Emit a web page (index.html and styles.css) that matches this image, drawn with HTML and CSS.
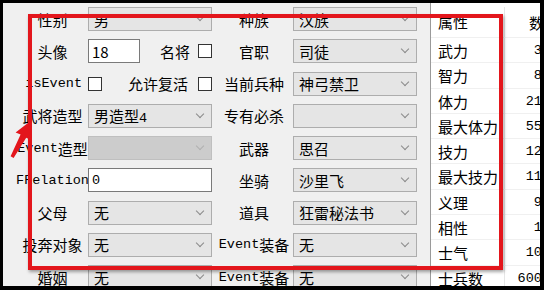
FILE: index.html
```html
<!DOCTYPE html>
<html lang="zh-CN">
<head>
    <meta charset="UTF-8">
    <title>武将属性</title>
    <link rel="stylesheet" href="styles.css">
</head>
<body>
    <div class="window">
        <div class="form">
            <span class="lbl">性别</span>
            <div class="combo"><span>男</span><i class="chev"></i></div>
            <span class="lbl">种族</span>
            <div class="combo"><span>汉族</span><i class="chev"></i></div>

            <span class="lbl">头像</span>
            <div class="field">
                <div class="text short">18</div>
                <span class="side">名将</span>
                <i class="check"></i>
            </div>
            <span class="lbl">官职</span>
            <div class="combo"><span>司徒</span><i class="chev"></i></div>

            <span class="lbl right"><span class="en">isEvent</span></span>
            <div class="field">
                <i class="check"></i>
                <span class="side wide">允许复活</span>
                <i class="check"></i>
            </div>
            <span class="lbl">当前兵种</span>
            <div class="combo"><span>神弓禁卫</span><i class="chev"></i></div>

            <span class="lbl">武将造型</span>
            <div class="combo"><span>男造型<span class="en">4</span></span><i class="chev"></i></div>
            <span class="lbl">专有必杀</span>
            <div class="combo"><span></span><i class="chev"></i></div>

            <span class="lbl"><span class="en">Event</span>造型</span>
            <div class="combo off"><span></span><i class="chev"></i></div>
            <span class="lbl">武器</span>
            <div class="combo"><span>思召</span><i class="chev"></i></div>

            <span class="lbl"><span class="en">FRelation</span></span>
            <div class="text"><span class="en">0</span></div>
            <span class="lbl">坐骑</span>
            <div class="combo"><span>沙里飞</span><i class="chev"></i></div>

            <span class="lbl">父母</span>
            <div class="combo"><span>无</span><i class="chev"></i></div>
            <span class="lbl">道具</span>
            <div class="combo"><span>狂雷秘法书</span><i class="chev"></i></div>

            <span class="lbl">投奔对象</span>
            <div class="combo"><span>无</span><i class="chev"></i></div>
            <span class="lbl"><span class="en">Event</span>装备</span>
            <div class="combo"><span>无</span><i class="chev"></i></div>

            <span class="lbl">婚姻</span>
            <div class="combo"><span>无</span><i class="chev"></i></div>
            <span class="lbl"><span class="en">Event</span>装备</span>
            <div class="combo"><span>无</span><i class="chev"></i></div>
        </div>

        <div class="props">
            <div class="prow head"><span>属性</span><span>数值</span></div>
            <div class="prow"><span>武力</span><span class="num">35</span></div>
            <div class="prow"><span>智力</span><span class="num">83</span></div>
            <div class="prow"><span>体力</span><span class="num">216</span></div>
            <div class="prow"><span>最大体力</span><span class="num">550</span></div>
            <div class="prow"><span>技力</span><span class="num">120</span></div>
            <div class="prow"><span>最大技力</span><span class="num">118</span></div>
            <div class="prow"><span>义理</span><span class="num">90</span></div>
            <div class="prow"><span>相性</span><span class="num">12</span></div>
            <div class="prow"><span>士气</span><span class="num">100</span></div>
            <div class="prow"><span>士兵数</span><span class="num">6000</span></div>
        </div>

        <div class="mark"></div>
        <svg class="arrow" width="40" height="60" viewBox="0 0 40 60">
            <polygon points="27.5,18 28,37 23.2,34.8 10.6,54.9 7.6,53.3 17.6,31.6 12.6,29.6" fill="#e3161c"/>
        </svg>
    </div>
</body>
</html>
```

FILE: styles.css
```css
body {
    margin: 0;
    background: #000;
    font-family: "Noto Sans CJK SC", sans-serif;
    font-size: 15px;
    color: #000;
}
.window {
    position: relative;
    display: flex;
    width: 537px;
    height: 283px;
    margin: 3px 0 0 3px;
    background: #f0f0f0;
    overflow: hidden;
}
.form {
    display: grid;
    grid-template-columns: 74px 124px 81px 124px;
    grid-auto-rows: 24px;
    row-gap: 8.25px;
    padding: 4px 0 0 11px;
    flex: none;
}
.en {
    font-family: "Liberation Mono", monospace;
    font-size: 13.5px;
}
.lbl {
    display: flex;
    align-items: center;
    justify-content: center;
    padding-left: 3px;
    white-space: nowrap;
}
.lbl.right {
    justify-content: flex-end;
    padding-right: 6px;
}
.combo {
    display: flex;
    align-items: center;
    justify-content: space-between;
    box-sizing: border-box;
    padding: 0 8px 0 5px;
    background: #e5e5e5;
    border: 1px solid #adadad;
    white-space: nowrap;
}
.combo.off {
    background: #cccccc;
    border-color: #bfbfbf;
}
.chev {
    width: 5px;
    height: 5px;
    margin-top: -4px;
    border-right: 1px solid #8a8a8a;
    border-bottom: 1px solid #8a8a8a;
    transform: rotate(45deg);
}
.combo.off .chev {
    border-color: #b0b0b0;
}
.field {
    display: flex;
    align-items: center;
}
.text {
    display: flex;
    align-items: center;
    box-sizing: border-box;
    padding-left: 3px;
    height: 24px;
    background: #fff;
    border: 1px solid #7a7a7a;
}
.text.short {
    width: 52px;
}
.side {
    margin: 0 8px 0 auto;
}
.side.wide {
    margin-right: 10px;
}
.check {
    width: 12px;
    height: 12px;
    background: #fff;
    border: 1px solid #333;
}
.props {
    margin-left: 13px;
    width: 125px;
    flex: none;
    background: #fff;
    border-left: 1px solid #9a9a9a;
}
.prow {
    display: grid;
    grid-template-columns: 74px 1fr;
    height: 25.3px;
    align-items: center;
    border-bottom: 1px solid #f0f0f0;
    box-sizing: border-box;
    white-space: nowrap;
}
.prow span:first-child {
    padding-left: 7px;
    border-right: 1px solid #e6e6e6;
    line-height: 25px;
}
.prow.head {
    height: 35px;
    padding-top: 4px;
}
.prow.head span:first-child {
    line-height: 30px;
}
.prow.head span:last-child {
    padding-left: 24px;
}
.num {
    text-align: right;
    padding-right: 6px;
    font-family: "Liberation Mono", monospace;
    font-size: 13.5px;
}
.mark {
    position: absolute;
    left: 25px;
    top: 11px;
    width: 467px;
    height: 248px;
    border: 4px solid #e3161c;
    box-shadow: 1px 2px 3px rgba(0, 0, 0, 0.35);
}
.arrow {
    position: absolute;
    left: 0;
    top: 100px;
}
```
